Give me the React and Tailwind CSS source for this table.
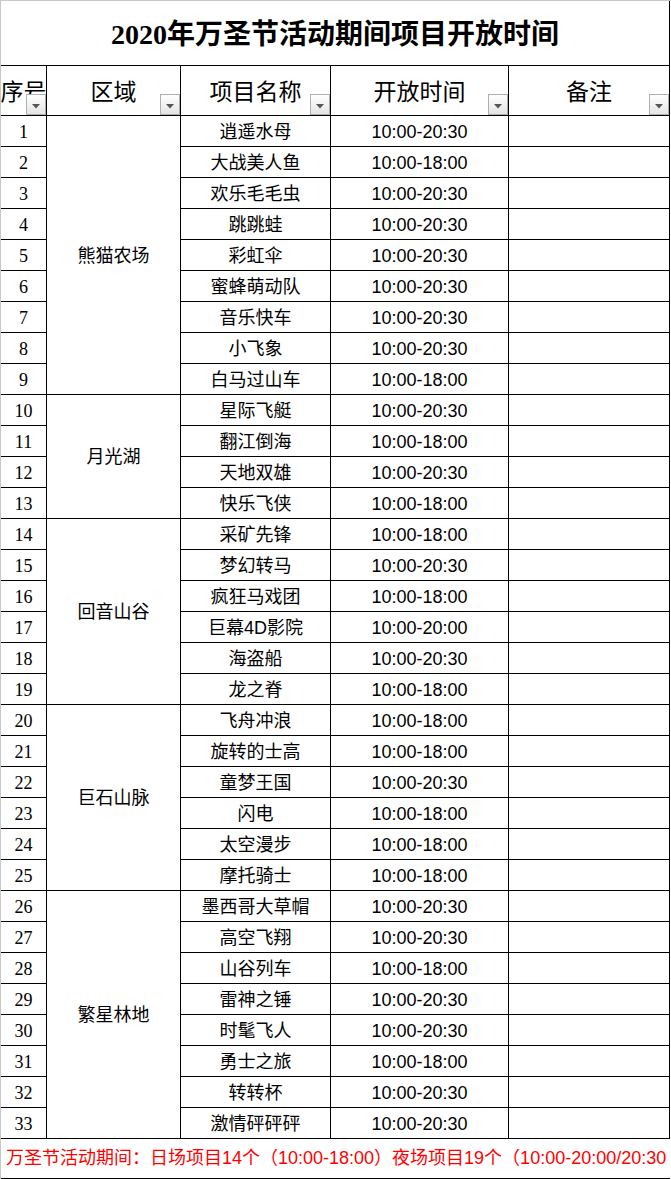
import React from 'react';

const groups = [
    {
        area: '熊猫农场',
        span: 'row-span-9',
        items: [
            ['逍遥水母', '10:00-20:30'],
            ['大战美人鱼', '10:00-18:00'],
            ['欢乐毛毛虫', '10:00-20:30'],
            ['跳跳蛙', '10:00-20:30'],
            ['彩虹伞', '10:00-20:30'],
            ['蜜蜂萌动队', '10:00-20:30'],
            ['音乐快车', '10:00-20:30'],
            ['小飞象', '10:00-20:30'],
            ['白马过山车', '10:00-18:00'],
        ],
    },
    {
        area: '月光湖',
        span: 'row-span-4',
        items: [
            ['星际飞艇', '10:00-20:30'],
            ['翻江倒海', '10:00-18:00'],
            ['天地双雄', '10:00-20:30'],
            ['快乐飞侠', '10:00-18:00'],
        ],
    },
    {
        area: '回音山谷',
        span: 'row-span-6',
        items: [
            ['采矿先锋', '10:00-18:00'],
            ['梦幻转马', '10:00-20:30'],
            ['疯狂马戏团', '10:00-18:00'],
            ['巨幕4D影院', '10:00-20:00'],
            ['海盗船', '10:00-20:30'],
            ['龙之脊', '10:00-18:00'],
        ],
    },
    {
        area: '巨石山脉',
        span: 'row-span-6',
        items: [
            ['飞舟冲浪', '10:00-18:00'],
            ['旋转的士高', '10:00-18:00'],
            ['童梦王国', '10:00-20:30'],
            ['闪电', '10:00-18:00'],
            ['太空漫步', '10:00-18:00'],
            ['摩托骑士', '10:00-18:00'],
        ],
    },
    {
        area: '繁星林地',
        span: 'row-span-8',
        items: [
            ['墨西哥大草帽', '10:00-20:30'],
            ['高空飞翔', '10:00-20:30'],
            ['山谷列车', '10:00-18:00'],
            ['雷神之锤', '10:00-20:30'],
            ['时髦飞人', '10:00-20:30'],
            ['勇士之旅', '10:00-18:00'],
            ['转转杯', '10:00-20:30'],
            ['激情砰砰砰', '10:00-20:30'],
        ],
    },
];

const headers = ['序号', '区域', '项目名称', '开放时间', '备注'];

const cell = 'border-r border-b border-black flex items-center justify-center whitespace-nowrap';

function FilterButton() {
    return (
        <div className="absolute right-0 bottom-0 w-[20px] h-[21px] border border-[#b0b0b0] bg-gradient-to-b from-white to-[#e4e4e4] flex items-center justify-center">
            <svg width="8" height="5" viewBox="0 0 8 5" className="mt-[3px]">
                <polygon points="0,0 8,0 4,4.5" fill="#555" />
            </svg>
        </div>
    );
}

export default function App() {
    let n = 0;

    return (
        <div
            className="w-[671px] h-[1179px] bg-white border-t border-l border-[#c8c8c8] grid grid-cols-[46px_134px_150px_178px_161px] grid-rows-[65px_50px_repeat(33,31px)_40px] overflow-hidden text-black"
            style={{ fontFamily: '"Liberation Sans", "Noto Sans CJK SC", sans-serif' }}
        >
            <div
                className={`${cell} col-span-5 text-[28px] font-bold pt-[3px]`}
                style={{ fontFamily: '"Liberation Serif", "Noto Sans CJK SC", serif' }}
            >
                2020年万圣节活动期间项目开放时间
            </div>

            {headers.map((h) => (
                <div key={h} className={`${cell} relative text-[23px] pt-[3px]`}>
                    {h}
                    <FilterButton />
                </div>
            ))}

            {groups.map((g) => (
                <React.Fragment key={g.area}>
                    {g.items.map(([name, time], i) => {
                        n += 1;
                        return (
                            <React.Fragment key={name}>
                                <div
                                    className={`${cell} text-[18px] pt-[2px]`}
                                    style={{ fontFamily: '"Liberation Serif", serif' }}
                                >
                                    {n}
                                </div>
                                {i === 0 && (
                                    <div className={`${cell} ${g.span} text-[18px] pt-[2px]`}>{g.area}</div>
                                )}
                                <div className={`${cell} text-[18px] pt-[2px]`}>{name}</div>
                                <div className={`${cell} text-[18px] pt-[2px]`}>{time}</div>
                                <div className={cell}></div>
                            </React.Fragment>
                        );
                    })}
                </React.Fragment>
            ))}

            <div className="col-span-5 border-b border-black flex items-center pl-[5px] text-[18px] text-[#ff0000] whitespace-nowrap overflow-hidden">
                万圣节活动期间：日场项目14个（10:00-18:00）夜场项目19个（10:00-20:00/20:30
            </div>
        </div>
    );
}
